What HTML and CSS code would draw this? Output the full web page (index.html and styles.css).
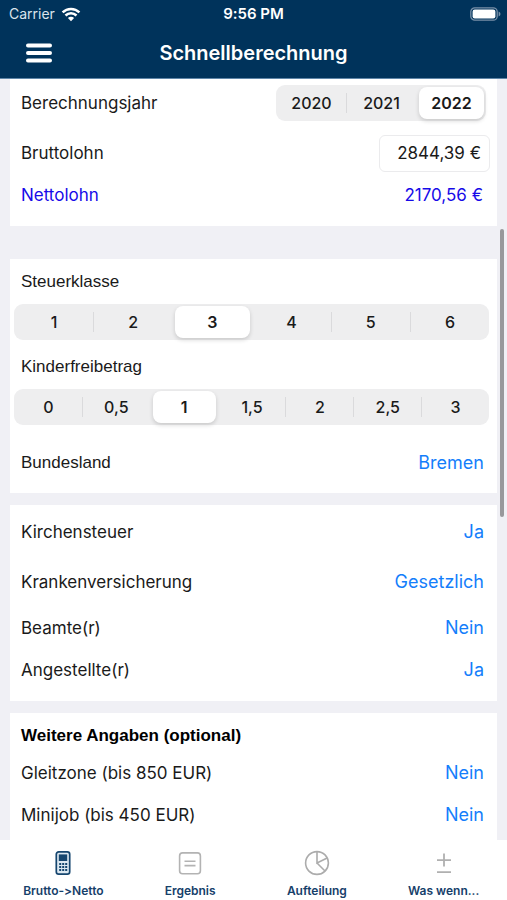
FILE: index.html
```html
<!DOCTYPE html>
<html lang="de">
<head>
<meta charset="utf-8">
<meta name="viewport" content="width=device-width, initial-scale=1">
<title>Schnellberechnung</title>
<link rel="stylesheet" href="styles.css">
</head>
<body>
<header class="header">
  <div class="status">
    <div class="carrier">Carrier
      <svg width="20" height="15" viewBox="0 0 20 15" aria-hidden="true"><g fill="none" stroke="#fff" stroke-width="2.5"><path d="M1.6 5.4a12 12 0 0 1 16.8 0"/><path d="M4.5 8.5a7.8 7.8 0 0 1 11 0"/></g><path fill="#fff" d="M6.9 11a4.4 4.4 0 0 1 6.2 0L10 14.2z"/></svg>
    </div>
    <div class="clock">9:56 PM</div>
    <svg class="battery" width="31" height="14" viewBox="0 0 31 14" aria-hidden="true"><rect x=".8" y=".8" width="26.4" height="12.4" rx="4" fill="none" stroke="#7890a8" stroke-width="1.3"/><rect x="2.6" y="2.6" width="22.8" height="8.8" rx="2.2" fill="#fff"/><path d="M28.6 4.6q1.9.8 1.9 2.4t-1.9 2.4z" fill="#7890a8"/></svg>
  </div>
  <nav class="navbar">
    <button class="menu" type="button" aria-label="Menü"><svg width="28" height="20" viewBox="0 0 28 20"><path d="M3 2.5h22M3 10h22M3 17.5h22" stroke="#fff" stroke-width="4" stroke-linecap="round"/></svg></button>
    <h1 class="title">Schnellberechnung</h1>
  </nav>
</header>

<main class="content">
  <section class="card card-summary">
    <div class="row row-m">
      <span id="jahr">Berechnungsjahr</span>
      <div class="segments segments-year" role="radiogroup" aria-labelledby="jahr">
        <label class="segment"><input type="radio" name="jahr"><span>2020</span></label>
        <label class="segment"><input type="radio" name="jahr"><span>2021</span></label>
        <label class="segment"><input type="radio" name="jahr" checked><span>2022</span></label>
      </div>
    </div>
    <div class="row row-l">
      <label for="brutto">Bruttolohn</label>
      <input class="amount" id="brutto" type="text" value="2844,39 €">
    </div>
    <div class="row row-s net"><span>Nettolohn</span><output>2170,56 €</output></div>
  </section>

  <section class="card">
    <h2 class="label" id="klasse">Steuerklasse</h2>
    <div class="segments" role="radiogroup" aria-labelledby="klasse">
      <label class="segment"><input type="radio" name="klasse"><span>1</span></label>
      <label class="segment"><input type="radio" name="klasse"><span>2</span></label>
      <label class="segment"><input type="radio" name="klasse" checked><span>3</span></label>
      <label class="segment"><input type="radio" name="klasse"><span>4</span></label>
      <label class="segment"><input type="radio" name="klasse"><span>5</span></label>
      <label class="segment"><input type="radio" name="klasse"><span>6</span></label>
    </div>
    <h2 class="label label-spaced" id="kinder">Kinderfreibetrag</h2>
    <div class="segments" role="radiogroup" aria-labelledby="kinder">
      <label class="segment"><input type="radio" name="kinder"><span>0</span></label>
      <label class="segment"><input type="radio" name="kinder"><span>0,5</span></label>
      <label class="segment"><input type="radio" name="kinder" checked><span>1</span></label>
      <label class="segment"><input type="radio" name="kinder"><span>1,5</span></label>
      <label class="segment"><input type="radio" name="kinder"><span>2</span></label>
      <label class="segment"><input type="radio" name="kinder"><span>2,5</span></label>
      <label class="segment"><input type="radio" name="kinder"><span>3</span></label>
    </div>
    <div class="row row-xl"><label class="helv" for="land">Bundesland</label><button class="value" id="land" type="button">Bremen</button></div>
  </section>

  <section class="card card-status">
    <div class="row row-l"><label for="kirche">Kirchensteuer</label><button class="value" id="kirche" type="button">Ja</button></div>
    <div class="row row-m"><label for="kranken">Krankenversicherung</label><button class="value" id="kranken" type="button">Gesetzlich</button></div>
    <div class="row row-m"><label for="beamte">Beamte(r)</label><button class="value" id="beamte" type="button">Nein</button></div>
    <div class="row row-s"><label for="angestellt">Angestellte(r)</label><button class="value" id="angestellt" type="button">Ja</button></div>
  </section>

  <section class="card">
    <h2 class="label label-bold">Weitere Angaben (optional)</h2>
    <div class="row row-s"><label for="gleit">Gleitzone (bis 850 EUR)</label><button class="value" id="gleit" type="button">Nein</button></div>
    <div class="row row-l"><label for="mini">Minijob (bis 450 EUR)</label><button class="value" id="mini" type="button">Nein</button></div>
  </section>
  <div class="scrollbar" aria-hidden="true"></div>
</main>

<nav class="tabs">
  <a class="tab" href="#brutto">
    <svg width="26" height="26" viewBox="0 0 26 26" aria-hidden="true"><rect x="6.3" y="1.8" width="13.4" height="22.4" rx="2.4" fill="#dce8f1" stroke="#16466f" stroke-width="1.7"/><rect x="8.8" y="4.4" width="8.4" height="6.6" fill="#16466f"/><path d="M9.2 14h2m1 0h2m1 0h2M9.2 17h2m1 0h2m1 0h2M9.2 20h2m1 0h2m1 0h2" stroke="#16466f" stroke-width="1.8"/></svg>
    <span>Brutto-&gt;Netto</span></a>
  <a class="tab" href="#ergebnis">
    <svg width="26" height="26" viewBox="0 0 26 26" fill="none" stroke="#b3b3b3" stroke-width="1.6" aria-hidden="true"><rect x="2.6" y="2.9" width="20.8" height="20.8" rx="3"/><path d="M7.5 11.2h11M7.5 15.6h11"/></svg>
    <span>Ergebnis</span></a>
  <a class="tab" href="#aufteilung">
    <svg width="26" height="26" viewBox="0 0 26 26" fill="none" stroke="#acacac" stroke-width="1.6" aria-hidden="true"><circle cx="13" cy="13" r="11.4"/><path d="M13 1.6V13l10.2-5M13 13l8 8"/></svg>
    <span>Aufteilung</span></a>
  <a class="tab" href="#waswenn">
    <svg width="26" height="26" viewBox="0 0 26 26" fill="none" stroke="#b0b0b0" stroke-width="1.8" aria-hidden="true"><path d="M13 3.5v13M6 10.2h14M6 22.2h14"/></svg>
    <span>Was wenn...</span></a>
</nav>
</body>
</html>
```
FILE: styles.css
```css
* { box-sizing: border-box; }

body {
  margin: 0;
  height: 100vh;
  display: flex;
  flex-direction: column;
  background: #f0f0f5;
  color: #1a1a1a;
  font: 17px/20px Inter, "Liberation Sans", sans-serif;
  font-feature-settings: "calt" 0;
}

button, input { font: inherit; font-feature-settings: inherit; color: inherit; }
h1, h2 { margin: 0; }

.header {
  flex: none;
  background: #00335b;
  color: #fff;
  border-bottom: 1px solid #5f86a8;
}

.status {
  display: grid;
  grid-template-columns: 1fr auto 1fr;
  align-items: center;
  height: 28px;
  padding: 0 6px;
  font-size: 14px;
}
.carrier { display: flex; align-items: center; gap: 6px; padding-left: 3px; color: #dbe4ec; }
.clock { font-size: 15px; font-weight: 600; }
.battery { justify-self: end; }

.navbar {
  display: grid;
  grid-template-columns: 60px 1fr 60px;
  align-items: center;
  height: 50px;
}
.menu {
  display: flex;
  justify-content: flex-end;
  width: 53px;
  padding: 0;
  border: 0;
  background: none;
}
.title { font-size: 20px; line-height: 24px; font-weight: 600; text-align: center; }

.content {
  position: relative;
  flex: 1;
  min-height: 0;
  overflow: hidden;
  display: flex;
  flex-direction: column;
  gap: 12px;
  padding: 0 10px;
}

.card { flex: none; background: #fff; }
.card-summary { margin-bottom: 21px; padding: 1px 0 16px; }
.card-status { padding-bottom: 12px; }

.row {
  display: flex;
  align-items: center;
  justify-content: space-between;
  padding: 0 13px 0 11px;
}
.row-s { min-height: 30px; }
.row-m { min-height: 46px; }
.row-l { min-height: 54px; }
.row-xl { min-height: 60px; margin-top: 8px; }
.card-status .row-s { min-height: 38px; }
.card-summary .row { padding-right: 11px; }
.card-summary .row-l { padding-right: 7px; }
.card-summary .net { padding-right: 14px; color: #170ae8; }

.label {
  display: flex;
  align-items: center;
  min-height: 45px;
  padding-left: 11px;
  font: 17px/20px "Liberation Sans", Arial, sans-serif;
}
.label-spaced { padding-top: 4px; min-height: 49px; }
.label-bold { font-weight: 700; color: #000; }
.helv { font: 17px/20px "Liberation Sans", Arial, sans-serif; }

.segments {
  display: flex;
  height: 36px;
  margin: 0 8px 0 4px;
  padding: 2px 0;
  border-radius: 9px;
  background: #eeeeef;
}
.segments-year { width: 210px; margin: 0; }
.segment { position: relative; flex: 1; display: flex; font-size: 16px; font-weight: 500; }
.segment input { position: absolute; opacity: 0; margin: 0; }
.segment span {
  flex: 1;
  display: flex;
  align-items: center;
  justify-content: center;
  margin: 0 2px 0 3px;
  border-radius: 8px;
}
.segment + .segment::before {
  content: "";
  position: absolute;
  top: 6px;
  left: 0;
  width: 1px;
  height: 20px;
  background: #dadadc;
}
.segment:has(:checked)::before,
.segment:has(:checked) + .segment::before { display: none; }
.segment :checked + span {
  background: #fff;
  font-weight: 600;
  box-shadow: 0 2px 4px rgba(0, 0, 0, 0.16);
}

.amount {
  width: 111px;
  height: 37px;
  padding: 0 8px;
  border: 1px solid #ebebed;
  border-radius: 6px;
  background: #fff;
  text-align: right;
}

.value {
  padding: 0;
  border: 0;
  background: none;
  color: #147efb;
  font-size: 18px;
}

.scrollbar {
  position: absolute;
  top: 150px;
  right: 3px;
  width: 4px;
  height: 288px;
  border-radius: 2px;
  background: #98989b;
}

.tabs {
  flex: none;
  display: grid;
  grid-template-columns: repeat(4, 1fr);
  height: 60px;
  padding-top: 10px;
  background: #fff;
}
.tab {
  display: flex;
  flex-direction: column;
  align-items: center;
  gap: 7px;
  color: #16406a;
  font-size: 12px;
  line-height: 16px;
  font-weight: 600;
  text-decoration: none;
  white-space: nowrap;
}
```
